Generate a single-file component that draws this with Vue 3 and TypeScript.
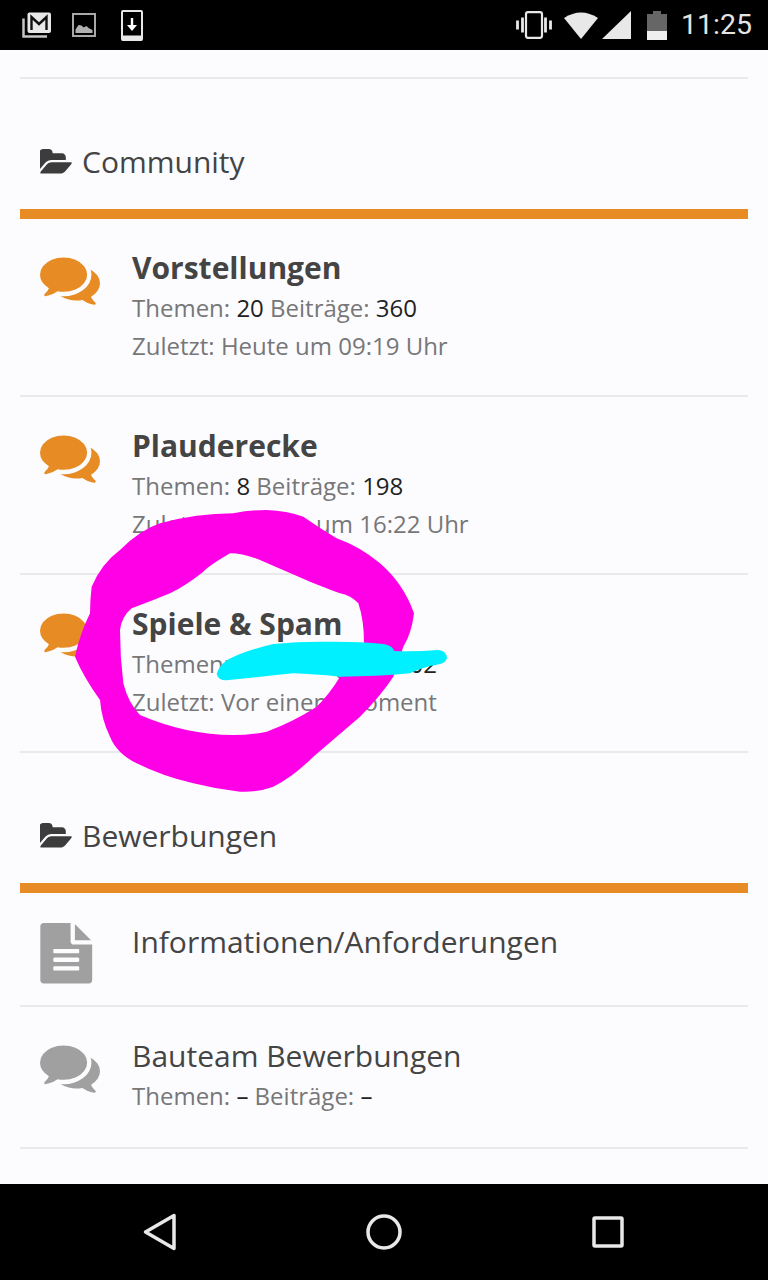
<script setup lang="ts">
interface Forum {
  title: string
  icon: 'comments' | 'file'
  unread?: boolean
  topics?: string
  posts?: string
  last?: string
}

interface Category {
  name: string
  forums: Forum[]
}

const categories: Category[] = [
  {
    name: 'Community',
    forums: [
      { title: 'Vorstellungen', icon: 'comments', unread: true, topics: '20', posts: '360', last: 'Heute um 09:19 Uhr' },
      { title: 'Plauderecke', icon: 'comments', unread: true, topics: '8', posts: '198', last: 'Gestern um 16:22 Uhr' },
      { title: 'Spiele & Spam', icon: 'comments', unread: true, topics: '12', posts: '1.302', last: 'Vor einem Moment' },
    ],
  },
  {
    name: 'Bewerbungen',
    forums: [
      { title: 'Informationen/Anforderungen', icon: 'file' },
      { title: 'Bauteam Bewerbungen', icon: 'comments', topics: '–', posts: '–' },
    ],
  },
]

const folderPath =
  'M1845 931q0 35-53 93l-336 396q-43 51-120.5 86.5t-143.5 35.5h-1088q-34 0-60.5-13t-26.5-43q0-35 53-93l336-396q43-51 120.5-86.5t143.5-35.5h1088q34 0 60.5 13t26.5 43zm-343-344v160h-832q-94 0-197 47.5t-164 119.5l-337 396-5 6q0-4-.5-12.5t-.5-12.5v-960q0-92 66-158t158-66h320q92 0 158 66t66 158v32h544q92 0 158 66t66 158z'
const commentsPath =
  'M1408 768q0 139-94 257t-256.5 186.5-353.5 68.5q-86 0-176-16-124 88-278 128-36 9-86 16h-3q-11 0-20.5-8t-11.5-21q-1-3-1-6.5t.5-6.5 2-6l2.5-5 3.5-5.5 4-5 4.5-5 4-4.5q5-6 23-25t26-29.5 22.5-29 25-38.5 20.5-44q-124-72-195-177t-71-224q0-139 94-257t256.5-186.5 353.5-68.5 353.5 68.5 256.5 186.5 94 257zm384 256q0 120-71 224.5t-195 176.5q10 24 20.5 44t25 38.5 22.5 29 26 29.5 23 25q1 1 4 4.5t4.5 5 4 5 3.5 5.5l2.5 5 2 6 .5 6.5-1 6.5q-3 14-13 22t-22 7q-50-7-86-16-154-40-278-128-90 16-176 16-271 0-472-132 58 4 88 4 161 0 309-45t264-129q125-92 192-212t67-254q0-77-23-152 129 71 204 178t75 230z'
const filePath =
  'M1596 476q14 14 28 36h-472v-472q22 14 36 28zm-476 164h544v1056q0 40-28 68t-68 28h-1344q-40 0-68-28t-28-68v-1600q0-40 28-68t68-28h800v544q0 40 28 68t68 28zm160 736v-64q0-14-9-23t-23-9h-704q-14 0-23 9t-9 23v64q0 14 9 23t23 9h704q14 0 23-9t9-23zm0-256v-64q0-14-9-23t-23-9h-704q-14 0-23 9t-9 23v64q0 14 9 23t23 9h704q14 0 23-9t9-23zm0-256v-64q0-14-9-23t-23-9h-704q-14 0-23 9t-9 23v64q0 14 9 23t23 9h704q14 0 23-9t9-23z'
</script>

<template>
  <div class="screen">
    <header class="status-bar">
      <div class="status-left">
        <svg class="ic-mail" viewBox="0 0 30 28" fill="none" stroke="#e8e8e8">
          <path d="M1.500 7.500V25.500H25" stroke-width="2.500" opacity=".85" />
          <rect x="5.500" y="1.500" width="23.500" height="20.500" rx="2" fill="#e8e8e8" stroke="none" />
          <path d="M9.500 19V6l7.500 7 7.500-7v13" stroke="#111" stroke-width="2.400" />
        </svg>
        <svg class="ic-image" viewBox="0 0 24 24">
          <rect x="1" y="1" width="22" height="22" fill="none" stroke="#a8a8a8" stroke-width="2" />
          <path d="M3.500 20v-3.500l3-4.500 3 .5 2 2 3-1.500 2 2 4 2v3z" fill="#b0b0b0" />
        </svg>
        <svg class="ic-download" viewBox="0 0 22 31">
          <rect x="1" y="1" width="20" height="29" rx="1" fill="none" stroke="#e8e8e8" stroke-width="2" />
          <rect x="1" y="25.500" width="20" height="5" fill="#e8e8e8" />
          <path d="M11 8v8" stroke="#fff" stroke-width="2.400" />
          <path d="M6 15h10l-5 6z" fill="#fff" />
        </svg>
      </div>
      <div class="status-right">
        <svg class="ic-vibrate" viewBox="0 0 36 28" fill="none" stroke="#e8e8e8" stroke-width="2.200">
          <rect x="10" y="1.200" width="16" height="25.600" rx="2" />
          <path d="M6.500 6.500v15M1.500 9.500v9M29.500 6.500v15M34.500 9.500v9" stroke-width="2.800" />
        </svg>
        <svg class="ic-wifi" viewBox="0 0 34 28"><path d="M0 7Q17-4 34 7L17 28z" fill="#e8e8e8" /></svg>
        <svg class="ic-signal" viewBox="0 0 29 28"><path d="M29 0v28H0z" fill="#e8e8e8" /></svg>
        <svg class="ic-battery" viewBox="0 0 20 29">
          <path d="M6 0h8v3h6v17H0V3h6z" fill="#666" />
          <path d="M0 20h20v9H0z" fill="#efefef" />
        </svg>
        <span class="clock">11:25</span>
      </div>
    </header>

    <main class="content">
      <section v-for="cat in categories" :key="cat.name" class="category">
        <h2 class="cat-title">
          <svg class="folder" viewBox="0 0 1920 1792"><path :d="folderPath" fill="currentColor" /></svg>
          {{ cat.name }}
        </h2>
        <div
          v-for="forum in cat.forums"
          :key="forum.title"
          :class="['forum', { 'forum-plain': !forum.unread, 'forum-solo': !forum.topics, 'forum-nolast': forum.topics && !forum.last }]"
        >
          <svg v-if="forum.icon === 'comments'" class="forum-icon" viewBox="0 0 1792 1792">
            <path :d="commentsPath" fill="currentColor" />
          </svg>
          <svg v-else class="forum-icon file-icon" viewBox="0 0 1792 1792">
            <path :d="filePath" fill="currentColor" />
          </svg>
          <div class="forum-body">
            <div class="forum-title">{{ forum.title }}</div>
            <div v-if="forum.topics" class="forum-line">
              Themen: <b>{{ forum.topics }}</b> Beiträge: <b>{{ forum.posts }}</b>
            </div>
            <div v-if="forum.last" class="forum-line">Zuletzt: {{ forum.last }}</div>
          </div>
        </div>
      </section>
    </main>

    <footer class="nav-bar">
      <svg class="nav-back" viewBox="0 0 34 38" fill="none" stroke="#e8e8e8" stroke-width="3.500" stroke-linejoin="round">
        <path d="M2.500 19 31 2.500v33z" />
      </svg>
      <svg class="nav-home" viewBox="0 0 36 36" fill="none" stroke="#e8e8e8" stroke-width="3.500">
        <circle cx="18" cy="18" r="16" />
      </svg>
      <svg class="nav-recent" viewBox="0 0 32 32" fill="none" stroke="#e8e8e8" stroke-width="3.500" stroke-linejoin="round">
        <rect x="2" y="2" width="28" height="28" rx="1" />
      </svg>
    </footer>

    <!-- marker scribbles on top of the screenshot -->
    <svg class="scribble" viewBox="0 0 1200 900">
      <path
        fill="#ff00e6"
        fill-rule="evenodd"
        d="M520 40Q570 30 620 30Q680 32 730 50Q780 85 830 115Q900 140 960 190Q1030 250 1062 340Q1055 400 1030 440L1000 530Q960 590 900 650Q830 710 760 770Q700 830 640 860Q590 878 540 875Q470 868 400 850Q310 830 230 790Q170 760 150 710Q125 660 120 600Q70 530 45 470Q60 400 90 340Q90 300 95 260Q125 190 180 150Q240 90 300 70Q410 40 520 40Z
           M510 160Q450 195 430 215Q380 255 330 280Q270 305 215 325Q185 350 180 390Q180 470 190 550Q205 610 240 645Q310 675 380 690Q450 705 520 705Q570 705 620 695Q700 665 770 620Q810 580 840 530L912 430Q912 360 895 310Q870 285 840 280Q800 265 750 245Q680 215 600 180Q550 160 510 160Z"
      />
      <path
        fill="#00f0ff"
        d="M470 522Q476 498 505 478Q560 450 640 432Q720 424 800 425Q900 424 970 432Q998 436 1003 453Q1070 455 1135 450Q1160 452 1161 475Q1155 492 1130 494Q1090 500 1050 520Q950 530 840 530Q760 522 700 520Q600 530 500 541Q475 542 470 522Z"
      />
    </svg>
  </div>
</template>

<style scoped>
.screen {
  position: relative;
  width: 768px;
  height: 1280px;
  display: flex;
  flex-direction: column;
  overflow: hidden;
  background: #fcfcff;
  font-family: 'Open Sans', sans-serif;
}

.status-bar {
  height: 50px;
  flex: none;
  background: #000;
  display: flex;
  align-items: center;
  justify-content: space-between;
}

.status-left {
  display: flex;
  align-items: center;
  padding-left: 22px;
}

.ic-mail {
  width: 30px;
  height: 28px;
}

.ic-image {
  width: 24px;
  height: 24px;
  margin-left: 20px;
}

.ic-download {
  width: 22px;
  height: 31px;
  margin-left: 25px;
}

.status-right {
  display: flex;
  align-items: center;
  padding-right: 16px;
}

.ic-vibrate {
  width: 36px;
  height: 28px;
}

.ic-wifi {
  width: 34px;
  height: 28px;
  margin-left: 12px;
}

.ic-signal {
  width: 29px;
  height: 28px;
  margin-left: 4px;
}

.ic-battery {
  width: 20px;
  height: 29px;
  margin-left: 16px;
}

.clock {
  margin-left: 14px;
  font-family: Roboto, sans-serif;
  font-size: 28.5px;
  line-height: 50px;
  color: #e4e4e4;
}

.content {
  flex: 1;
  min-height: 0;
  overflow: hidden;
  margin: 0 20px;
  padding-top: 27px;
}

.category:first-child {
  border-top: 2px solid #e9e9ec;
}

.cat-title {
  margin: 0;
  padding: 63px 0 27px 20px;
  font-size: 30px;
  line-height: 40px;
  font-weight: 400;
  color: #444;
  display: flex;
  align-items: center;
  gap: 9px;
  border-bottom: 10px solid #e78c25;
}

.folder {
  width: 33px;
  height: 31px;
  color: #3c3c3c;
}

.forum {
  display: flex;
  align-items: flex-start;
  padding: 30px 0 30px 20px;
  border-bottom: 2px solid #e9e9ec;
}

.forum-solo {
  padding-bottom: 21.5px;
}

.forum-nolast {
  padding-bottom: 32px;
}

.forum-icon {
  width: 60px;
  height: 60px;
  flex: none;
  margin-right: 32px;
  color: #e78c25;
}

.forum-plain .forum-icon {
  color: #a0a0a0;
}

.file-icon {
  width: 60.5px;
  height: 60.5px;
  margin-left: -4px;
  margin-right: 35.5px;
}

.forum-title {
  font-size: 30px;
  line-height: 38px;
  font-weight: 400;
  color: #444;
  margin-bottom: 2px;
}

.forum:not(.forum-plain) .forum-title {
  font-weight: 700;
}

.forum-line {
  font-size: 24px;
  line-height: 38px;
  color: #777;
}

.forum-line b {
  font-weight: 400;
  color: #222;
}

.nav-bar {
  height: 96px;
  flex: none;
  background: #000;
  position: relative;
  display: grid;
  grid-template-columns: 320px 128px 320px;
  align-items: center;
}

.nav-back {
  width: 34px;
  height: 38px;
  justify-self: end;
  margin-right: 143px;
}

.nav-home {
  width: 36px;
  height: 36px;
  justify-self: center;
}

.nav-recent {
  width: 32px;
  height: 32px;
  margin-left: 144px;
}

.scribble {
  position: absolute;
  left: 60px;
  top: 500px;
  width: 400px;
  height: 300px;
  pointer-events: none;
}
</style>
